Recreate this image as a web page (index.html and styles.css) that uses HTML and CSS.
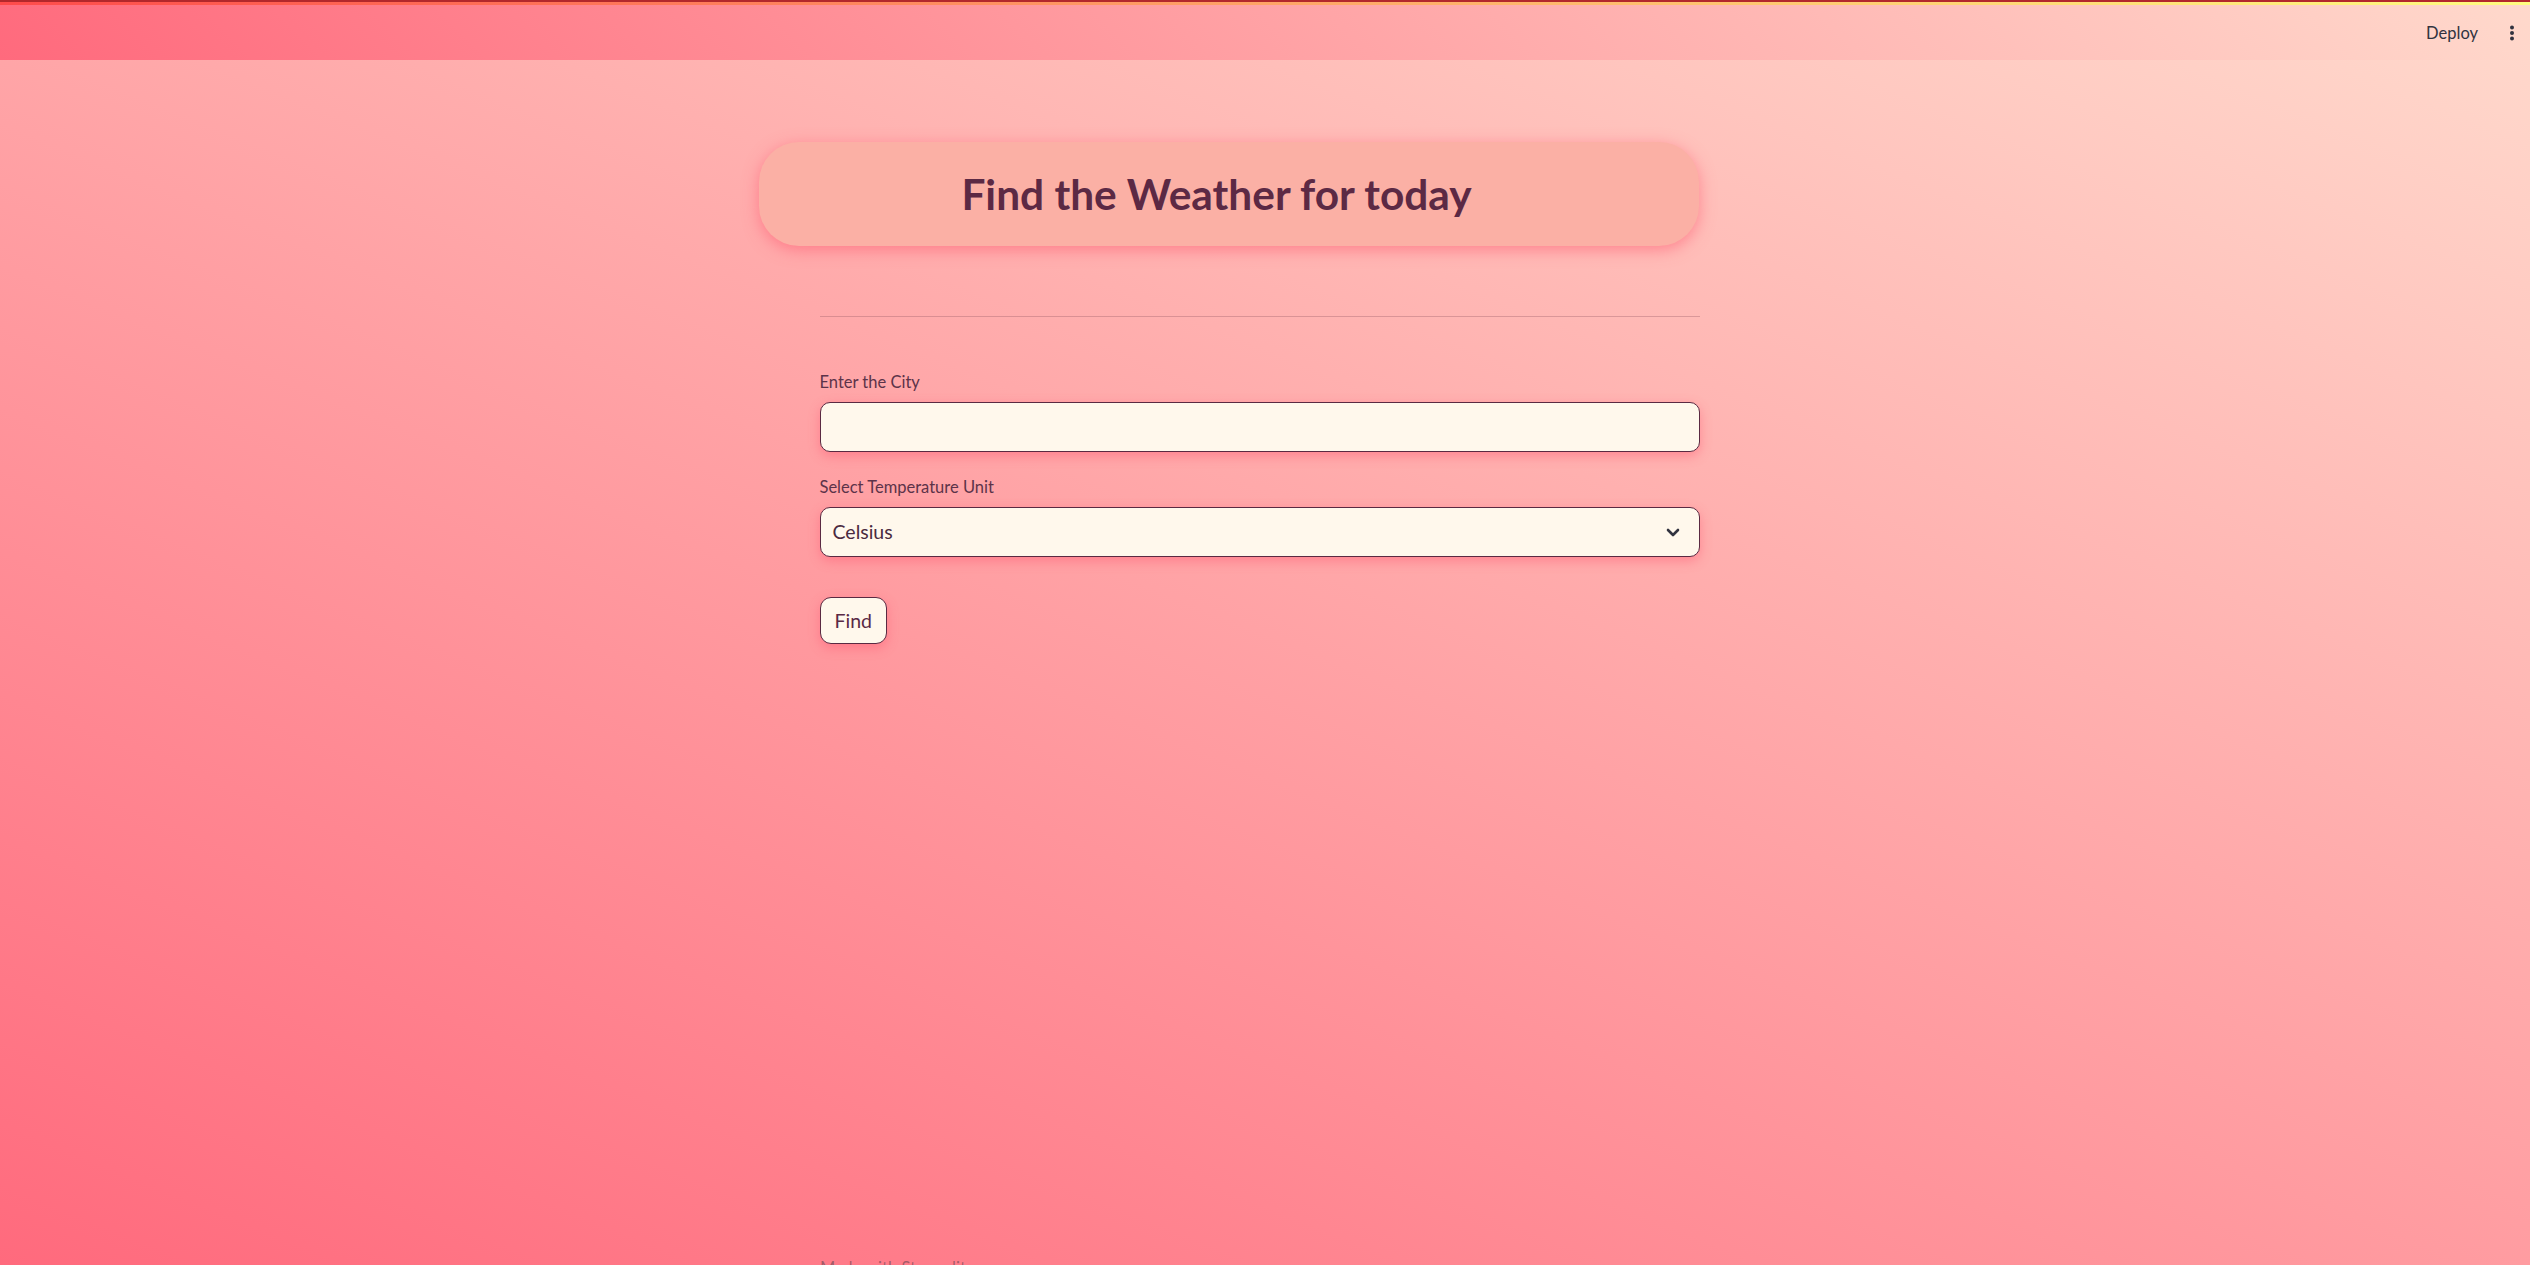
FILE: index.html
```html
<!DOCTYPE html>
<html lang="en">
<head>
<meta charset="utf-8">
<title>Weather</title>
<link rel="stylesheet" href="styles.css">
</head>
<body>
<div class="app">
  <header class="topbar">
    <div class="deco"></div>
    <div class="toolbar">
      <span class="deploy">Deploy</span>
      <span class="menu">
        <svg width="6" height="16" viewBox="0 0 6 16"><circle cx="3" cy="2.5" r="2" fill="#31333f"/><circle cx="3" cy="8" r="2" fill="#31333f"/><circle cx="3" cy="13.5" r="2" fill="#31333f"/></svg>
      </span>
    </div>
  </header>
  <main class="main">
    <div class="block">
      <div class="title-card"><h1 class="title">Find the Weather for today</h1></div>
      <hr class="rule">
      <label class="field-label" for="city">Enter the City</label>
      <input class="text-input" id="city" type="text">
      <label class="field-label">Select Temperature Unit</label>
      <div class="select">
        <span class="select-value">Celsius</span>
        <svg class="chevron" width="14" height="9" viewBox="0 0 14 9"><path d="M2 2 L7 7 L12 2" fill="none" stroke="#31333f" stroke-width="2.6" stroke-linecap="round" stroke-linejoin="round"/></svg>
      </div>
      <button class="find-btn" type="button">Find</button>
    </div>
    <footer class="footer">Made with Streamlit</footer>
  </main>
</div>
</body>
</html>
```
FILE: styles.css
```css
html, body {
  margin: 0;
  padding: 0;
}
body {
  font-family: Lato, "Source Sans Pro", "Liberation Sans", sans-serif;
}
.app {
  height: 100vh;
  overflow: hidden;
  display: flex;
  flex-direction: column;
  background: linear-gradient(22deg, #ff6a7d 0%, #ffdacd 100%);
}
.topbar {
  height: 60px;
  flex: none;
  display: flex;
  flex-direction: column;
  background: linear-gradient(45deg, #ff6a7d 0%, #ffd9cc 100%);
}
.deco {
  height: 3px;
  border-top: 2px solid #b3282c;
  background: linear-gradient(90deg, #ff4b4b, #fffd80);
  flex: none;
}
.toolbar {
  flex: 1;
  display: flex;
  align-items: center;
  justify-content: flex-end;
  padding: 1px 15px 0 0;
  gap: 31px;
}
.deploy {
  font-size: 16.5px;
  color: #31333f;
  line-height: 24px;
}
.menu {
  display: flex;
  align-items: center;
}
.main {
  flex: 1;
  display: flex;
  flex-direction: column;
  padding-right: 11px;
}
.block {
  width: 880px;
  margin: 82px auto 0;
  display: flex;
  flex-direction: column;
  align-items: flex-start;
}
.title-card {
  box-sizing: border-box;
  width: 940px;
  height: 104px;
  margin-left: -61px;
  border-radius: 40px;
  background: #fbb0a5;
  box-shadow: 0 4px 16px rgba(255, 85, 110, 0.55);
  display: flex;
  align-items: center;
  justify-content: center;
}
.title {
  margin: 0 0 0 -24px;
  font-size: 42.4px;
  font-weight: 700;
  color: #5c2944;
  line-height: 1;
}
.rule {
  width: 100%;
  margin: 70px 0 0;
  border: 0;
  border-top: 1px solid rgba(150, 90, 100, 0.35);
  height: 0;
}
.field-label {
  display: block;
  font-size: 16.5px;
  line-height: 24px;
  color: #5c3349;
  margin: 0 0 8px;
}
.rule + .field-label {
  margin-top: 53px;
}
.text-input {
  box-sizing: border-box;
  width: 100%;
  height: 50px;
  margin: 0 0 23px;
  border: 1px solid #5a2a42;
  border-radius: 10px;
  background: #fff8ec;
  box-shadow: 0 4px 12px rgba(255, 85, 110, 0.45);
  font-family: inherit;
  font-size: 19.5px;
  padding: 0 12px;
  outline: none;
}
.select {
  box-sizing: border-box;
  width: 100%;
  height: 50px;
  border: 1px solid #5a2a42;
  border-radius: 10px;
  background: #fff8ec;
  box-shadow: 0 4px 12px rgba(255, 85, 110, 0.45);
  display: flex;
  align-items: center;
  justify-content: space-between;
  padding: 0 19px 0 12px;
}
.select-value {
  font-size: 19.5px;
  color: #4a2a40;
  line-height: 24px;
}
.chevron {
  display: block;
}
.find-btn {
  margin-top: 40px;
  box-sizing: border-box;
  height: 47px;
  padding: 0 14px;
  border: 1px solid #5a2a42;
  border-radius: 11px;
  background: #fff8ec;
  box-shadow: 0 4px 12px rgba(255, 85, 110, 0.45);
  font-family: inherit;
  font-size: 19.5px;
  color: #5a2a45;
  cursor: pointer;
}
.footer {
  margin: auto 0 -15px 820px;
  font-size: 16.5px;
  line-height: 24px;
  color: rgba(49, 51, 63, 0.45);
}
```
